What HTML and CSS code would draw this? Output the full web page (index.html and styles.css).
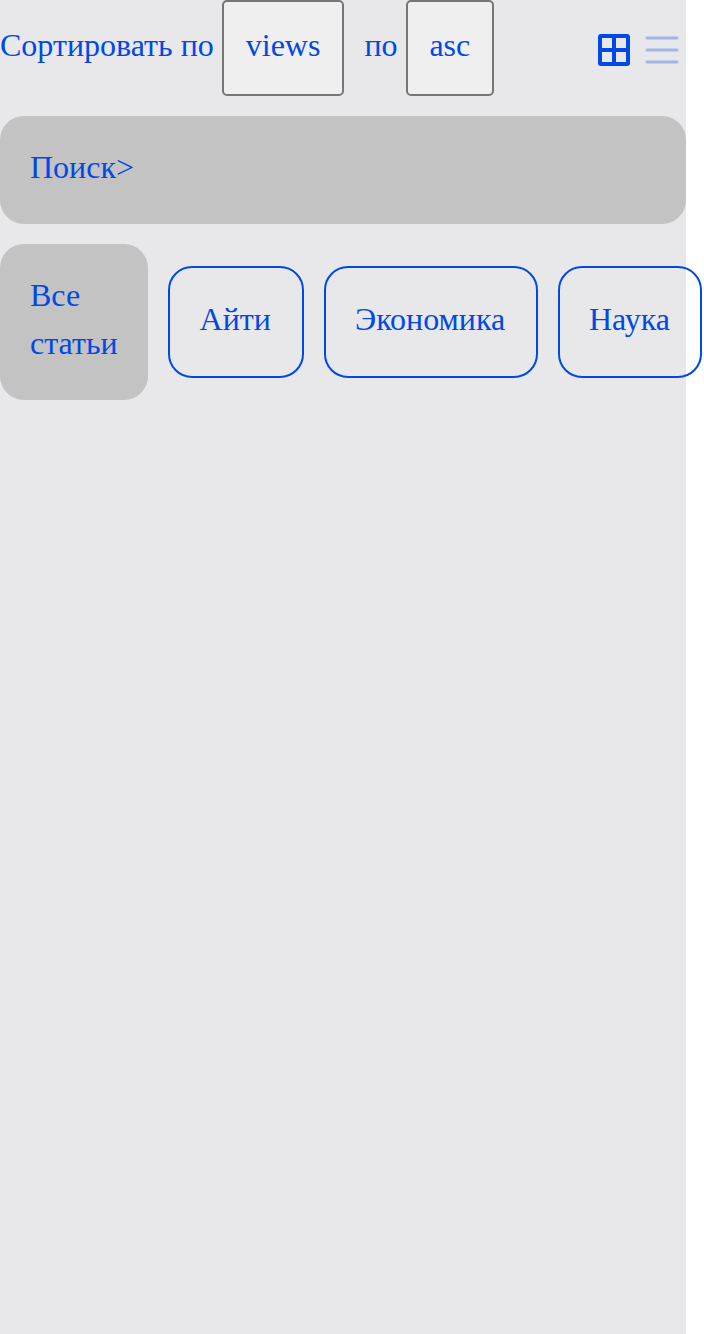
FILE: index.html
```html
<!DOCTYPE html>
<html lang="ru">
<head>
<meta charset="utf-8">
<title>Статьи</title>
<link rel="stylesheet" href="styles.css">
</head>
<body>
<main class="page">
  <header class="toolbar">
    <div class="sort">
      <span class="sort-label">Сортировать по</span>
      <button class="select select-field">views</button>
      <span class="sort-label">по</span>
      <button class="select select-order">asc</button>
    </div>
    <div class="views">
      <svg class="icon" viewBox="0 0 48 48"><path fill="#0049e6" fill-rule="evenodd" d="M11 8h26a3 3 0 0 1 3 3v26a3 3 0 0 1-3 3H11a3 3 0 0 1-3-3V11a3 3 0 0 1 3-3zM12 12v10h10V12zM26 12v10h10V12zM12 26v10h10V26zM26 26v10h10V26z"/></svg>
      <svg class="icon icon-muted" viewBox="0 0 48 48"><path stroke="#0049e6" stroke-width="3" stroke-linecap="round" d="M9 12h30M9 24h30M9 36h30"/></svg>
    </div>
  </header>
  <div class="search">Поиск&gt;</div>
  <nav class="tabs">
    <div class="tab tab-active">Все статьи</div>
    <div class="tab tab-it">Айти</div>
    <div class="tab tab-economics">Экономика</div>
    <div class="tab tab-science">Наука</div>
  </nav>
</main>
</body>
</html>
```
FILE: styles.css
```css
* { box-sizing: border-box; }
body {
  margin: 0;
  background: #fff;
  overflow: hidden;
}
.page {
  width: 686px;
  height: 1334px;
  display: flex;
  flex-direction: column;
  gap: 20px;
  background: #e8e8ea;
  color: #0049e6;
  font: 32px/48px "Liberation Serif", serif;
}
.toolbar {
  display: flex;
  justify-content: space-between;
  align-items: center;
  height: 96px;
}
.sort, .views {
  display: flex;
  align-items: center;
}
.sort-label {
  padding-bottom: 6px;
  white-space: nowrap;
}
.select {
  height: 96px;
  padding: 0 20px 6px;
  border: 2px solid #767676;
  border-radius: 5px;
  background: #efefef;
  color: inherit;
  font: inherit;
}
.select-field {
  width: 122px;
  margin: 0 20.300px 0 8.300px;
}
.select-order {
  width: 88px;
  margin-left: 8.300px;
}
.views { padding-top: 4px; }
.icon {
  display: block;
  width: 48px;
  height: 48px;
  fill: none;
}
.icon-muted { opacity: .3; }
.search {
  height: 108px;
  padding: 27px 30px;
  border-radius: 24px;
  background: #c3c3c3;
}
.tabs {
  display: flex;
  align-items: center;
  gap: 20px;
}
.tab {
  flex: none;
  padding: 27px 0 33px 29.600px;
  border: 2px solid #0049e6;
  border-radius: 24px;
}
.tab-active {
  width: 148px;
  padding: 27px 30px 33px;
  border: 0;
  background: #c3c3c3;
}
.tab-it { width: 136px; }
.tab-economics {
  width: 214px;
  padding-left: 29px;
}
.tab-science {
  width: 144px;
  padding-left: 29px;
}
```
